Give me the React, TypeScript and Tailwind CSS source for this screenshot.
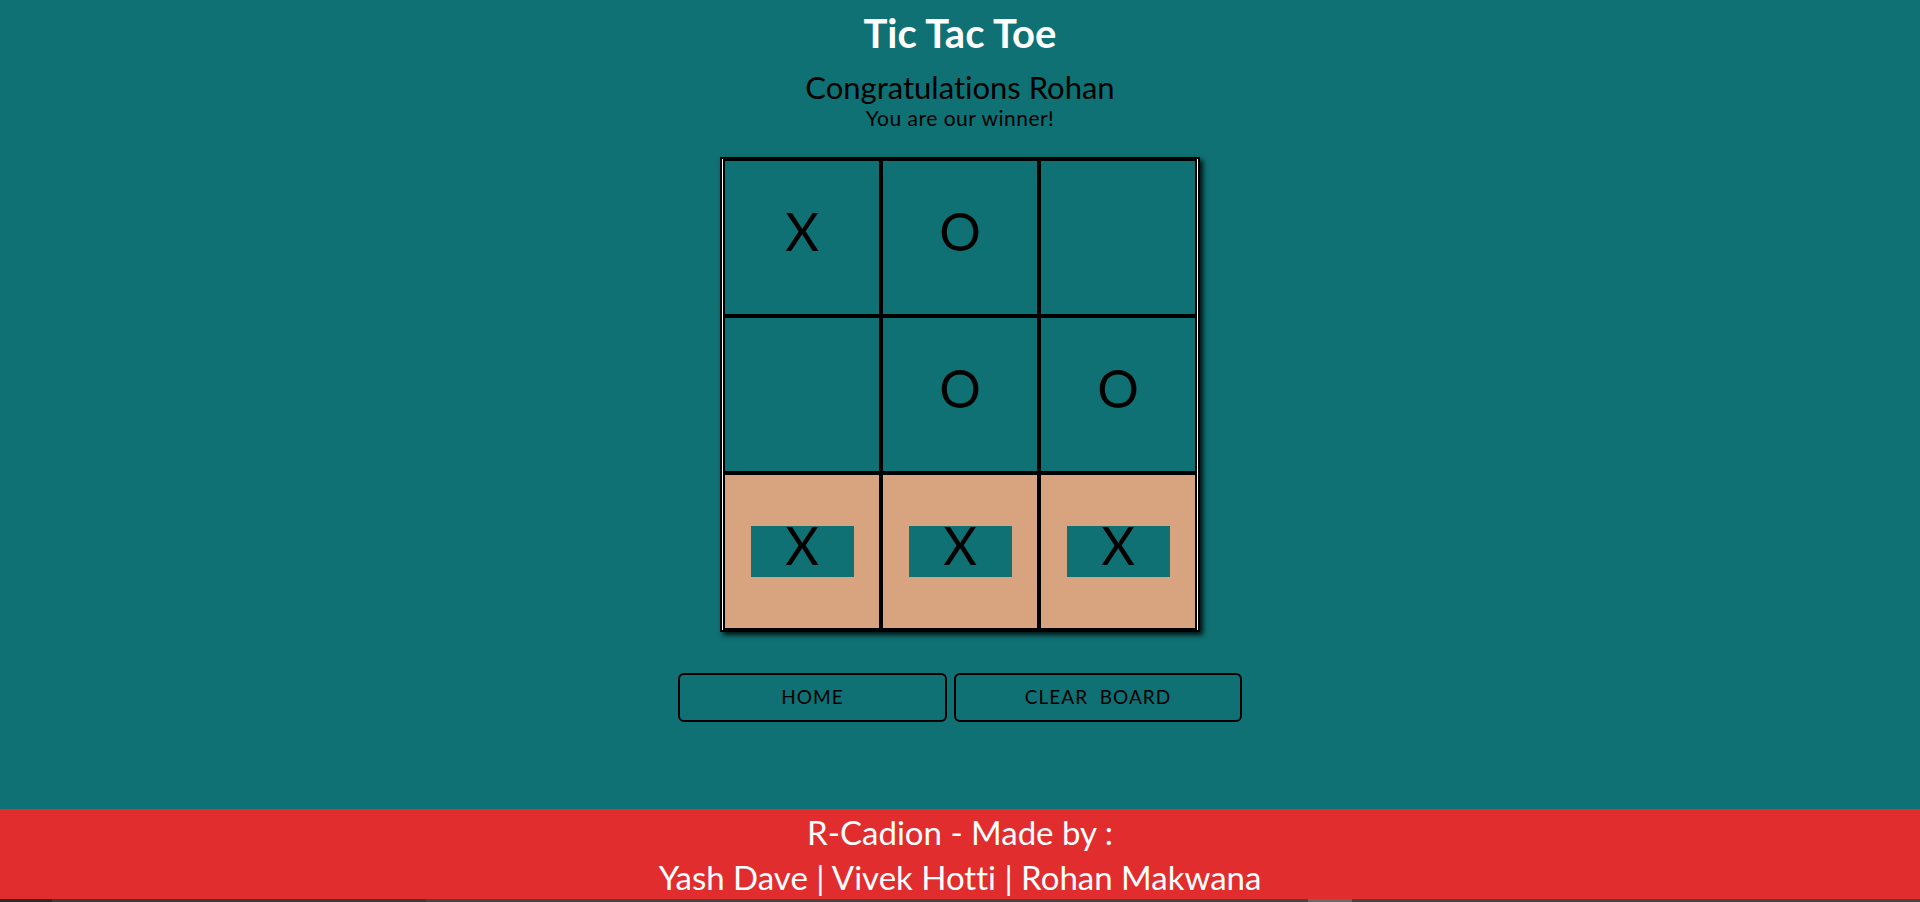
import React, { useState } from 'react';

type Mark = 'X' | 'O' | '';

const START: Mark[] = ['X', 'O', '', '', 'O', 'O', 'X', 'X', 'X'];
const WIN = [6, 7, 8];

const Square: React.FC<{ value: Mark; won: boolean }> = ({ value, won }) => (
    <div
        className={`w-[158px] h-[157px] border-2 border-black flex items-center justify-center ${
            won ? 'bg-[#d8a47f]' : 'bg-[#0f7173]'
        }`}
    >
        <span className="inline-block w-[103px] h-[51px] bg-[#0f7173] text-center text-[52px] leading-[38px] text-black">
            {value}
        </span>
    </div>
);

const App: React.FC = () => {
    const [board, setBoard] = useState<Mark[]>(START);

    return (
        <div className="h-screen flex flex-col bg-[#0f7173] font-['Lato',sans-serif] [font-variant-ligatures:none] overflow-hidden">
            <main className="flex-1 flex flex-col items-center">
                <h1 className="mt-[9px] text-[40px] leading-[48px] font-bold text-white">Tic Tac Toe</h1>
                <h2 className="mt-[12px] text-[31px] leading-[37px] text-black">Congratulations Rohan</h2>
                <p className="text-[21px] leading-[24px] tracking-[0.5px] text-black">You are our winner!</p>

                <div className="mt-[27px] border-2 border-black shadow-[3px_3px_5px_rgba(0,0,0,0.85)]">
                    <div className="border-x border-white grid grid-cols-3">
                        {board.map((v, i) => (
                            <Square key={i} value={v} won={WIN.includes(i)} />
                        ))}
                    </div>
                </div>

                <div className="mt-[41px] flex justify-center gap-[7px]">
                    <button className="w-[269px] h-[49px] border-2 border-black rounded-[6px] text-[19px] tracking-[1px] text-black flex items-center justify-center">
                        HOME
                    </button>
                    <button
                        onClick={() => setBoard(Array(9).fill(''))}
                        className="w-[288px] h-[49px] border-2 border-black rounded-[6px] text-[19px] tracking-[1px] text-black flex items-center justify-center"
                    >
                        CLEAR&nbsp; BOARD
                    </button>
                </div>
            </main>

            <footer className="h-[90px] bg-[#e22d2f] text-white text-[33px] leading-[45px] text-center pt-[1px] overflow-hidden">
                <div>R-Cadion - Made by :</div>
                <div>Yash Dave | Vivek Hotti | Rohan Makwana</div>
            </footer>
            <div className="h-[3px] flex">
                <div className="w-[52px] bg-[#2b2b2b]" />
                <div className="w-[374px] bg-[#3b3b3b]" />
                <div className="w-[882px] bg-[#454545]" />
                <div className="w-[44px] bg-[#6a6a6a]" />
                <div className="flex-1 bg-[#454545]" />
            </div>
        </div>
    );
};

export default App;
